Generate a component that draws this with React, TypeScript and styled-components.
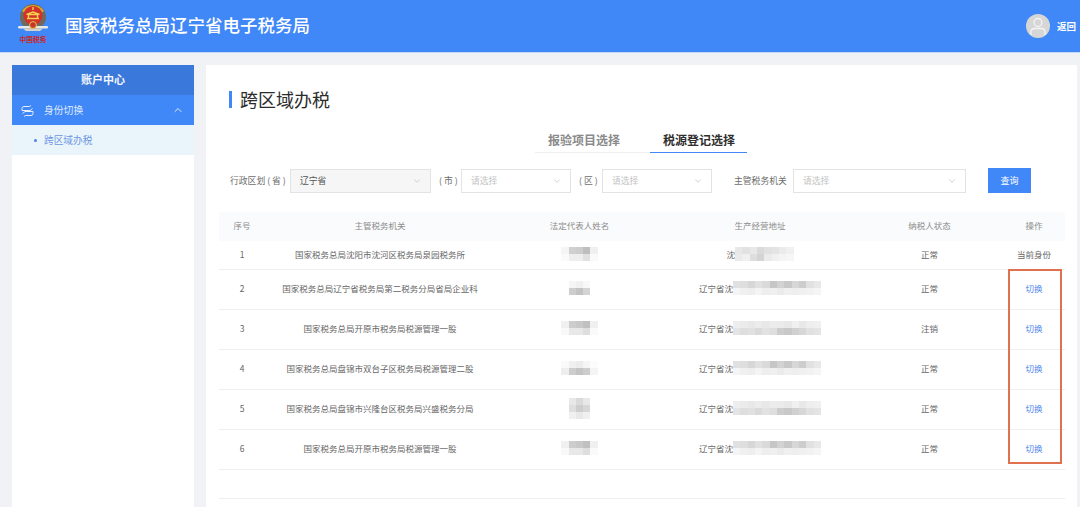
import { createGlobalStyle } from 'styled-components';
import styled from 'styled-components';
import { ChevronDown, ChevronUp } from 'lucide-react';

const GlobalStyle = createGlobalStyle`
  html, body {
    margin: 0;
    padding: 0;
    background: #f1f2f5;
    font-family: "Noto Sans CJK SC", "Liberation Sans", sans-serif;
  }
`;

const Page = styled.div`
  width: 1080px;
  height: 507px;
  overflow: hidden;
  background: #f1f2f5;
`;

const Header = styled.header`
  height: 52px;
  background: #4087f7;
  border-bottom: 1px solid #c5d8f6;
  box-sizing: content-box;
  display: flex;
  align-items: center;
  padding: 0 4px 0 18px;
`;

const LogoBox = styled.div`
  width: 30px;
  height: 46px;
  display: flex;
  flex-direction: column;
  align-items: center;
  margin-top: -3px;
`;

const LogoText = styled.span`
  font-size: 6.8px;
  line-height: 9px;
  color: #c8281e;
  font-weight: 700;
  white-space: nowrap;
`;

const SiteTitle = styled.h1`
  margin: 0 0 3px 17px;
  font-size: 17.5px;
  font-weight: 500;
  color: #fff;
  flex: 1;
`;

const Avatar = styled.div`
  width: 24px;
  height: 24px;
  border-radius: 50%;
  background: #d6d6d6;
  display: flex;
  align-items: center;
  justify-content: center;
  margin-right: 7px;
`;

const BackLink = styled.span`
  font-size: 9.5px;
  font-weight: 700;
  color: #fff;
`;

const Body = styled.div`
  display: flex;
  gap: 12px;
  padding: 12px 3px 0 12px;
  height: 442px;
`;

const Sidebar = styled.aside`
  width: 182px;
  background: #fff;
  flex-shrink: 0;
`;

const SideTitle = styled.div`
  height: 30px;
  box-sizing: border-box;
  padding-bottom: 2px;
  background: #3b78dc;
  color: #f2f6ff;
  font-size: 11px;
  font-weight: 700;
  display: flex;
  align-items: center;
  justify-content: center;
`;

const SideGroup = styled.div`
  height: 30px;
  box-sizing: border-box;
  background: #4087f7;
  color: #dfeaff;
  font-size: 9.8px;
  display: flex;
  align-items: center;
  padding: 0 10px 1px 9px;
  svg:first-child {
    margin: 2px 10px 0 0;
  }
  span {
    flex: 1;
  }
`;

const SideItem = styled.div`
  height: 30px;
  box-sizing: border-box;
  padding: 0 0 0 22px;
  background: #e9f5fb;
  color: #6f96e2;
  font-size: 9.7px;
  display: flex;
  align-items: center;
  &::before {
    content: '';
    width: 3px;
    height: 3px;
    border-radius: 50%;
    background: #4a83e6;
    margin-right: 7px;
  }
`;

const Main = styled.main`
  flex: 1;
  background: #fff;
  padding: 0 12px 0 13px;
`;

const PageTitle = styled.h2`
  margin: 23px 0 0 10px;
  height: 22px;
  display: flex;
  align-items: center;
  font-size: 18px;
  line-height: 22px;
  font-weight: 400;
  color: #2b2b2b;
  &::before {
    content: '';
    width: 3px;
    height: 17px;
    background: #4087f7;
    margin-right: 8px;
  }
`;

const Tabs = styled.div`
  display: flex;
  margin: 18px 0 0 316px;
`;

const Tab = styled.div<{ $active?: boolean }>`
  height: 25px;
  box-sizing: border-box;
  width: ${(props) => (props.$active ? '97px' : '115px')};
  padding-left: 13px;
  font-size: 12px;
  line-height: 17px;
  padding-top: 3px;
  font-weight: 700;
  color: ${(props) => (props.$active ? '#2f2f2f' : '#8a8a8a')};
  border-bottom: 1px solid ${(props) => (props.$active ? '#4087f7' : '#eef0f3')};
`;

const FilterRow = styled.div`
  display: flex;
  align-items: center;
  margin: 15px 0 0 11px;
  height: 25px;
`;

const FilterLabel = styled.label<{ $gap: number; $width: number }>`
  width: ${(props) => props.$width}px;
  margin-left: ${(props) => props.$gap}px;
  font-size: 8.8px;
  color: #6e6e6e;
  white-space: pre;
`;

const SelectBox = styled.div<{ $width: number; $disabled?: boolean }>`
  width: ${(props) => props.$width}px;
  height: 24px;
  box-sizing: border-box;
  border: 1px solid #e3e3e3;
  background: ${(props) => (props.$disabled ? '#f6f6f6' : '#fff')};
  color: ${(props) => (props.$disabled ? '#555' : '#c4c4c4')};
  font-size: 8.8px;
  display: flex;
  align-items: center;
  justify-content: space-between;
  padding: 0 8px 0 9px;
`;

const SearchButton = styled.button`
  margin-left: 22px;
  width: 43px;
  height: 25px;
  border: none;
  padding: 0;
  background: #4087f7;
  color: #fff;
  font-family: inherit;
  font-size: 9px;
`;

const TableWrap = styled.div`
  position: relative;
  margin-top: 19px;
`;

const Table = styled.table`
  width: 846px;
  border-collapse: collapse;
  table-layout: fixed;
  font-size: 8.5px;
  color: #666;
  text-align: center;
`;

const HeadRow = styled.tr`
  height: 29px;
  background: #fafbfc;
  color: #8c8c8c;
  th {
    font-weight: 400;
    padding: 0 0 4px;
  }
`;

const BodyRow = styled.tr<{ $first?: boolean }>`
  height: ${(props) => (props.$first ? '28px' : '40px')};
  border-bottom: 1px solid #eeeff2;
  td {
    padding: 0 0 2px;
  }
`;

const SwitchLink = styled.a`
  color: #4f86ee;
`;

const HighlightBox = styled.div`
  position: absolute;
  left: 789px;
  top: 57px;
  width: 54px;
  height: 195px;
  box-sizing: border-box;
  border: 2px solid #e0714f;
`;

const BottomRule = styled.div`
  width: 846px;
  margin-top: 28px;
  border-top: 1px solid #eeeff2;
`;

const AddressCell = styled.div`
  display: flex;
  align-items: center;
  justify-content: center;
`;

const Mosaic = styled.div<{ $cols: number }>`
  display: grid;
  grid-template-columns: repeat(${(props) => props.$cols}, 7.33px);
  grid-auto-rows: 7px;
  justify-content: center;
`;

const MosaicCell = styled.i`
  display: block;
`;

type Row = {
  id: number;
  org: string;
  address: string;
  status: string;
  action?: string;
  name: number[][];
  addr: number[][];
};

const NAME_A = [
  [245, 208, 205, 190, 240],
  [250, 238, 238, 225, 250],
];
const NAME_B = [
  [255, 245, 240, 248, 255],
  [255, 205, 195, 212, 255],
];
const NAME_C = [
  [240, 205, 200, 192, 240],
  [248, 232, 232, 222, 250],
];
const NAME_D = [
  [250, 240, 236, 245, 252],
  [238, 205, 196, 205, 244],
];
const NAME_E = [
  [232, 218, 232],
  [222, 205, 215],
  [240, 232, 240],
];
const ADDR_SHORT = [
  [232, 226, 232, 218, 225, 228, 235, 240],
  [235, 240, 222, 212, 235, 240, 244, 246],
];
const ADDR_A = [
  [225, 222, 215, 225, 218, 198, 210, 200, 215, 205, 225, 232],
  [245, 240, 238, 244, 238, 240, 235, 240, 238, 240, 242, 245],
];
const ADDR_B = [
  [238, 235, 232, 236, 232, 236, 235, 232, 240, 232, 238, 240],
  [228, 222, 225, 218, 226, 222, 205, 200, 208, 215, 225, 228],
];

const ROWS: Row[] = [
  { id: 1, org: '国家税务总局沈阳市沈河区税务局泉园税务所', address: '沈', status: '正常', action: '当前身份', name: NAME_A, addr: ADDR_SHORT },
  { id: 2, org: '国家税务总局辽宁省税务局第二税务分局省局企业科', address: '辽宁省沈', status: '正常', name: NAME_B, addr: ADDR_A },
  { id: 3, org: '国家税务总局开原市税务局税源管理一股', address: '辽宁省沈', status: '注销', name: NAME_C, addr: ADDR_B },
  { id: 4, org: '国家税务总局盘锦市双台子区税务局税源管理二股', address: '辽宁省沈', status: '正常', name: NAME_D, addr: ADDR_A },
  { id: 5, org: '国家税务总局盘锦市兴隆台区税务局兴盛税务分局', address: '辽宁省沈', status: '正常', name: NAME_E, addr: ADDR_B },
  { id: 6, org: '国家税务总局开原市税务局税源管理一股', address: '辽宁省沈', status: '正常', name: NAME_C, addr: ADDR_A },
];

const Blur = ({ cells }: { cells: number[][] }) => (
  <Mosaic $cols={cells[0].length}>
    {cells.flat().map((v, i) => (
      <MosaicCell key={i} style={{ background: `rgb(${v},${v},${v})` }} />
    ))}
  </Mosaic>
);

const Emblem = () => (
  <svg width="32" height="33" viewBox="0 0 32 33">
    <circle cx="16" cy="15" r="13" fill="#6f6a5c" />
    <path d="M5 9 A13 13 0 0 1 27 9 L23 12 H9 Z" fill="#d9a92e" />
    <circle cx="16" cy="13.5" r="9.5" fill="#d2322a" />
    <path d="M10 16.5 h12 M11.5 16.5 v-4 h9 v4 M9.5 12.5 L16 10 L22.5 12.5 M16 5 v3" stroke="#f4d04e" strokeWidth="1.4" fill="none" />
    <rect x="1" y="24" width="30" height="2.5" rx="1" fill="#e8e8e4" />
    <path d="M6 26.5 H26 L23 29 H9 Z" fill="#d4d2c8" />
    <circle cx="16" cy="23" r="3.4" fill="#c8352c" stroke="#e6c250" strokeWidth="1" />
  </svg>
);

const SwapIcon = () => (
  <svg width="13" height="12" viewBox="0 0 13 12" fill="none" stroke="#e6eeff" strokeWidth="1">
    <path d="M1 5.5 V3.5 A2 2 0 0 1 3 1.5 H8.5 L10 0.5 M1 5.5 H9 L11.5 3.5" />
    <path d="M12 6.5 V8.5 A2 2 0 0 1 10 10.5 H4.5 L3 11.5 M12 6.5 H4 L1.5 8.5" />
  </svg>
);

const UserIcon = () => (
  <svg width="18" height="20" viewBox="0 0 18 20" fill="none" stroke="#f4f4f4" strokeWidth="1.3">
    <circle cx="9" cy="6.5" r="4" />
    <path d="M2 19 V16 Q2 12.5 6 12.5 H12 Q16 12.5 16 16 V19" />
  </svg>
);

export default function App() {
  return (
    <Page>
      <GlobalStyle />
      <Header>
        <LogoBox>
          <Emblem />
          <LogoText>中国税务</LogoText>
        </LogoBox>
        <SiteTitle>国家税务总局辽宁省电子税务局</SiteTitle>
        <Avatar>
          <UserIcon />
        </Avatar>
        <BackLink>返回</BackLink>
      </Header>
      <Body>
        <Sidebar>
          <SideTitle>账户中心</SideTitle>
          <SideGroup>
            <SwapIcon />
            <span>身份切换</span>
            <ChevronUp size={12} color="#dfeaff" />
          </SideGroup>
          <SideItem>跨区域办税</SideItem>
        </Sidebar>
        <Main>
          <PageTitle>跨区域办税</PageTitle>
          <Tabs>
            <Tab>报验项目选择</Tab>
            <Tab $active>税源登记选择</Tab>
          </Tabs>
          <FilterRow>
            <FilterLabel $gap={0} $width={60}>行政区划 ( 省 )</FilterLabel>
            <SelectBox $width={141} $disabled>
              辽宁省
              <ChevronDown size={10} color="#c8c8c8" />
            </SelectBox>
            <FilterLabel $gap={8} $width={22}>( 市 )</FilterLabel>
            <SelectBox $width={110}>
              请选择
              <ChevronDown size={10} color="#c8c8c8" />
            </SelectBox>
            <FilterLabel $gap={8} $width={23}>( 区 )</FilterLabel>
            <SelectBox $width={110}>
              请选择
              <ChevronDown size={10} color="#c8c8c8" />
            </SelectBox>
            <FilterLabel $gap={22} $width={59}>主管税务机关</FilterLabel>
            <SelectBox $width={173}>
              请选择
              <ChevronDown size={10} color="#c8c8c8" />
            </SelectBox>
            <SearchButton>查询</SearchButton>
          </FilterRow>
          <TableWrap>
            <Table>
              <colgroup>
                <col width="46" />
                <col width="230" />
                <col width="169" />
                <col width="192" />
                <col width="147" />
                <col width="62" />
              </colgroup>
              <thead>
                <HeadRow>
                  <th>序号</th>
                  <th>主管税务机关</th>
                  <th>法定代表人姓名</th>
                  <th>生产经营地址</th>
                  <th>纳税人状态</th>
                  <th>操作</th>
                </HeadRow>
              </thead>
              <tbody>
                {ROWS.map((row) => (
                  <BodyRow key={row.id} $first={row.id === 1}>
                    <td>{row.id}</td>
                    <td>{row.org}</td>
                    <td>
                      <Blur cells={row.name} />
                    </td>
                    <td>
                      <AddressCell>
                        <span>{row.address}</span>
                        <Blur cells={row.addr} />
                      </AddressCell>
                    </td>
                    <td>{row.status}</td>
                    <td>{row.action ? row.action : <SwitchLink>切换</SwitchLink>}</td>
                  </BodyRow>
                ))}
              </tbody>
            </Table>
            <HighlightBox />
            <BottomRule />
          </TableWrap>
        </Main>
      </Body>
    </Page>
  );
}
